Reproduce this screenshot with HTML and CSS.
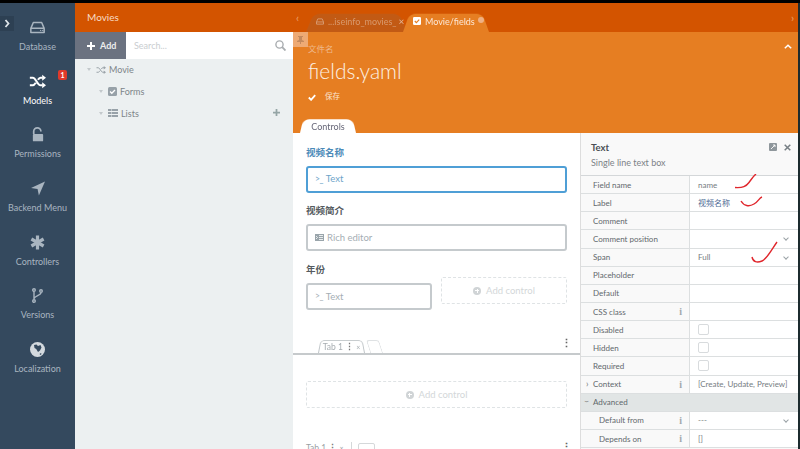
FILE: index.html
```html
<!DOCTYPE html>
<html lang="en">
<head>
  <meta charset="UTF-8">
  <title>Movie/fields</title>
  <link rel="stylesheet" href="styles.css">
</head>
<body>
<div class="app">
  <nav class="side">
    <span class="side-toggle"><svg width="7" height="9" viewBox="0 0 7 9"><path d="M1.5 1l3 3.500-3 3.500" fill="none" stroke="#dfe5ea" stroke-width="1.800"/></svg></span>
    <a class="nav-item">
      <svg class="nav-icon" width="15" height="13" viewBox="0 0 18 16"><path d="M4 2h10l3 7v5H1V9z M1.500 9h15" fill="none" stroke="currentColor" stroke-width="1.800" stroke-linejoin="round"/><path d="M12 11.500h1.500M14.500 11.500H16" stroke="currentColor" stroke-width="1.200"/></svg>
      <span>Database</span>
    </a>
    <a class="nav-item active">
      <svg class="nav-icon" width="17" height="14" viewBox="0 0 20 16"><path d="M1 3.500h3.500c3.500 0 5.500 9 9 9H16M1 12.500h3.500c1.500 0 2.500-1.500 3.500-3M10.500 6c.9-1.400 1.900-2.500 3-2.500H16" fill="none" stroke="currentColor" stroke-width="2.400"/><path d="M15.500 0l4.500 3.500L15.500 7zM15.500 9l4.500 3.500-4.500 3.500z" fill="currentColor"/></svg>
      <span>Models</span>
      <b class="badge">1</b>
    </a>
    <a class="nav-item">
      <svg class="nav-icon" width="12" height="15" viewBox="0 0 14 17"><path d="M2 8V5a4.200 4.200 0 0 1 8.400 0" fill="none" stroke="currentColor" stroke-width="2"/><rect x="1" y="8" width="12" height="8.500" rx="1" fill="currentColor"/></svg>
      <span>Permissions</span>
    </a>
    <a class="nav-item">
      <svg class="nav-icon" width="14" height="14" viewBox="0 0 16 16"><path d="M16 0L9 16 7.500 8.500 0 7.500z" fill="currentColor"/></svg>
      <span>Backend Menu</span>
    </a>
    <a class="nav-item">
      <svg class="nav-icon" width="15" height="15" viewBox="0 0 15 15"><path d="M7.500 .5v14M1.400 4l12.200 7M13.600 4L1.400 11" stroke="currentColor" stroke-width="3.200"/></svg>
      <span>Controllers</span>
    </a>
    <a class="nav-item">
      <svg class="nav-icon" width="11" height="15" viewBox="0 0 11 15"><g fill="none" stroke="currentColor" stroke-width="1.400"><circle cx="2" cy="2" r="1.300"/><circle cx="2" cy="13" r="1.300"/><circle cx="9" cy="3" r="1.300"/><path d="M2 3.500v8M9 4.500c0 3-6 3-7 6"/></g></svg>
      <span>Versions</span>
    </a>
    <a class="nav-item">
      <svg class="nav-icon" width="15" height="15" viewBox="0 0 15 15"><circle cx="7.500" cy="7.500" r="7.500" fill="#d3d9de"/><path d="M4 3l2.500-.5L8 4l2.500-1 1 2.500-1.500 3-2 1.500-1.800-3L4.500 6zM9.500 12l1.500-1 .5 1-1 1z" fill="#34495e"/></svg>
      <span>Localization</span>
    </a>
  </nav>

  <section class="tree-panel">
    <header class="tree-head">Movies</header>
    <div class="tree-tools">
      <button class="add-btn"><svg width="8" height="8" viewBox="0 0 8 8"><path d="M4 0v8M0 4h8" stroke="#fff" stroke-width="2"/></svg>Add</button>
      <div class="search">
        <span>Search...</span>
        <svg width="11" height="11" viewBox="0 0 11 11"><circle cx="4.500" cy="4.500" r="3.600" fill="none" stroke="#a9adb0" stroke-width="1.400"/><path d="M7.200 7.200L10.500 10.500" stroke="#a9adb0" stroke-width="1.800"/></svg>
      </div>
    </div>
    <ul class="tree">
      <li class="tree-row">
        <i class="caret"></i>
        <svg width="10" height="8" viewBox="0 0 20 16"><path d="M1 3.500h3.500c3.500 0 5.500 9 9 9H16M1 12.500h3.500c1.500 0 2.500-1.500 3.500-3M10.500 6c.9-1.400 1.900-2.500 3-2.500H16" fill="none" stroke="#9aa3a9" stroke-width="2"/><path d="M15.500 0l4.500 3.500L15.500 7zM15.500 9l4.500 3.500-4.500 3.500z" fill="#9aa3a9"/></svg>
        Movie
      </li>
      <li class="tree-row sub">
        <i class="caret"></i>
        <svg width="9" height="9" viewBox="0 0 9 9"><rect width="9" height="9" rx="1.500" fill="#97a1a8"/><path d="M2 4.500l1.800 1.800L7 3" fill="none" stroke="#fff" stroke-width="1.300"/></svg>
        Forms
      </li>
      <li class="tree-row sub">
        <i class="caret"></i>
        <svg width="10" height="8" viewBox="0 0 10 8"><path d="M0 0h3v2H0zM3.500 0H10v2H3.500zM0 3h3v2H0zM3.500 3H10v2H3.500zM0 6h3v2H0zM3.500 6H10v2H3.500z" fill="#97a1a8"/></svg>
        Lists
        <svg class="row-plus" width="7" height="7" viewBox="0 0 8 8"><path d="M4 0v8M0 4h8" stroke="#95a5a6" stroke-width="2"/></svg>
      </li>
    </ul>
  </section>

  <main class="main">
    <div class="tabbar">
      <span class="tab-arrow">‹</span>
      <div class="doc-tab">
        <svg width="8" height="7" viewBox="0 0 18 16"><path d="M4 2h10l3 7v5H1V9z M1.500 9h15" fill="none" stroke="#d8a07a" stroke-width="2"/></svg>
        <span>...iseinfo_movies_</span><em>×</em>
      </div>
      <div class="doc-tab current">
        <svg width="8" height="8" viewBox="0 0 9 9"><rect width="9" height="9" rx="1.500" fill="#fff"/><path d="M2 4.500l1.800 1.800L7 3" fill="none" stroke="#e67e22" stroke-width="1.300"/></svg>
        <span>Movie/fields</span><i class="dot"></i>
      </div>
      <span class="tab-arrow right">›</span>
    </div>

    <div class="hero">
      <span class="pin"><svg width="7" height="8" viewBox="0 0 7 8"><path d="M1 0h5v1H5v3l2 1v1H4v2H3V6H0V5l2-1V1H1z" fill="#c48a5e"/></svg></span>
      <div class="hero-label">文件名</div>
      <h1>fields.yaml</h1>
      <div class="save"><svg width="8" height="7" viewBox="0 0 8 7"><path d="M.8 3.500l2.300 2.300L7.200 1.200" fill="none" stroke="#fff" stroke-width="1.800"/></svg>保存</div>
      <svg class="collapse" width="8" height="5" viewBox="0 0 8 5"><path d="M.8 4.200L4 1.200l3.200 3" fill="none" stroke="#fff" stroke-width="1.500"/></svg>
      <div class="hero-tab">Controls</div>
    </div>

    <div class="split">
      <div class="form">
        <label class="f-label on">视频名称</label>
        <div class="control on"><span class="prompt">&gt;_</span> Text</div>

        <label class="f-label">视频简介</label>
        <div class="control"><svg width="9" height="7" viewBox="0 0 9 7"><path d="M0 0h9v7H0z" fill="#9aa5ab"/><path d="M4 1.500h4M4 3.500h4M4 5.500h4M1 2l1.500 1.500L1 5" fill="none" stroke="#fff" stroke-width=".8"/></svg> Rich editor</div>

        <div class="two">
          <div class="col">
            <label class="f-label">年份</label>
            <div class="control"><span class="prompt">&gt;_</span> Text</div>
          </div>
          <div class="col">
            <div class="add-control"><i class="plus-dot"></i>Add control</div>
          </div>
        </div>

        <div class="tabs-head">
          <div class="mini-tab">Tab 1 <b>⋮</b> <small>×</small></div>
          <div class="mini-add"></div>
          <b class="dots">⋮</b>
        </div>
        <div class="tab-body">
          <div class="add-control"><i class="plus-dot"></i>Add control</div>
        </div>
        <div class="tabs-foot">
          <span>Tab 1 <b>⋮</b> <small>×</small></span>
          <i class="foot-box"></i>
          <b class="dots">⋮</b>
        </div>
      </div>

      <aside class="inspector">
        <div class="insp-head">
          <strong>Text</strong>
          <p>Single line text box</p>
          <svg class="insp-max" width="8" height="8" viewBox="0 0 8 8"><rect width="8" height="8" rx="1" fill="#8f979c"/><path d="M2 6l4-4M4 2h2v2" fill="none" stroke="#fff" stroke-width=".9"/></svg>
          <svg class="insp-close" width="7" height="7" viewBox="0 0 7 7"><path d="M.7.700l5.600 5.600M6.300.700L.7 6.300" stroke="#777f84" stroke-width="1.500"/></svg>
        </div>
        <div class="prop"><span class="k">Field name</span><span class="v">name</span></div>
        <div class="prop"><span class="k">Label</span><span class="v blue">视频名称</span></div>
        <div class="prop"><span class="k">Comment</span><span class="v"></span></div>
        <div class="prop"><span class="k">Comment position</span><span class="v"><i class="chev"></i></span></div>
        <div class="prop"><span class="k">Span</span><span class="v">Full<i class="chev"></i></span></div>
        <div class="prop"><span class="k">Placeholder</span><span class="v"></span></div>
        <div class="prop"><span class="k">Default</span><span class="v"></span></div>
        <div class="prop"><span class="k">CSS class<i class="info">i</i></span><span class="v"></span></div>
        <div class="prop"><span class="k">Disabled</span><span class="v"><i class="box"></i></span></div>
        <div class="prop"><span class="k">Hidden</span><span class="v"><i class="box"></i></span></div>
        <div class="prop"><span class="k">Required</span><span class="v"><i class="box"></i></span></div>
        <div class="prop"><span class="k"><u class="tw">›</u>Context<i class="info">i</i></span><span class="v">[Create, Update, Preview]</span></div>
        <div class="prop group"><span class="k"><u class="tw down">›</u>Advanced</span></div>
        <div class="prop"><span class="k deep">Default from<i class="info">i</i></span><span class="v">---<i class="chev"></i></span></div>
        <div class="prop"><span class="k deep">Depends on<i class="info">i</i></span><span class="v">[]</span></div>
      </aside>
    </div>

    <!-- hand drawn marks over the inspector -->
    <svg class="marks" width="100" height="100" viewBox="0 0 100 100">
      <path d="M0 13.500c8 .5 11-1 14-5s4-6 7-8.500" />
      <path d="M6 27c3 5 8 6 13 3s5-6 8-7" />
      <path d="M17 83c1 5 5 6 10 4s10-12 15-19" />
    </svg>
  </main>
</div>
</body>
</html>
```

FILE: styles.css
```css
* { box-sizing: border-box; }
html, body { margin: 0; height: 100%; overflow: hidden; }
body { background: #000; font-family: Lato, "Noto Sans CJK SC", sans-serif; font-size: 9px; color: #555; }
svg { flex: none; }
ul { list-style: none; margin: 0; padding: 0; }

.app { display: flex; height: 449px; padding: 3px 2px 0 0; background: #1c2b2e; position: relative; }
.app::before { content: ""; position: absolute; left: 0; right: 0; top: 0; height: 3px; background: #000; }

/* left navigation */
.side { width: 75px; flex: none; background: #34495e; padding-top: 16px; position: relative; }
.side-toggle { position: absolute; left: 0; top: 13px; width: 14px; height: 15px; background: #2d4053; display: flex; align-items: center; justify-content: center; }
.nav-item { height: 53.700px; display: flex; flex-direction: column; align-items: center; color: #a9b5c0; font-size: 9px; position: relative; }
.nav-item .nav-icon { height: 17px; margin-bottom: 5px; }
.nav-item.active { color: #fff; }
.badge { position: absolute; left: 58px; top: -3px; width: 9px; height: 10px; background: #e0392b; border-radius: 2px; color: #fff; font-size: 7px; font-weight: 700; text-align: center; line-height: 10px; }

/* model tree */
.tree-panel { width: 218px; flex: none; background: #ecf0f1; }
.tree-head { height: 29px; background: #d35400; color: #f8dcc6; font-size: 10px; line-height: 29px; padding-left: 12px; }
.tree-tools { display: flex; height: 27px; }
.add-btn { width: 51px; border: 0; padding: 0 0 0 12px; background: #6b7280; color: #eee; font: 700 9px Lato, sans-serif; display: flex; align-items: center; gap: 5px; }
.search { flex: 1; background: #fff; display: flex; align-items: center; justify-content: space-between; padding: 0 7px 0 8px; color: #c9cdd0; font-size: 9px; }
.tree-row { height: 21.700px; display: flex; align-items: center; gap: 3px; padding-left: 12px; font-size: 9px; color: #7d8589; position: relative; }
.tree-row.sub { padding-left: 24px; }
.caret { width: 0; height: 0; border: 2.500px solid transparent; border-top: 3px solid #c3c9cc; border-bottom: 0; margin-right: 2px; }
.row-plus { position: absolute; right: 13px; top: 7px; }

/* main area */
.main { flex: 1; min-width: 0; background: #fff; display: flex; flex-direction: column; position: relative; }
.tabbar { height: 29px; background: #d35400; display: flex; align-items: flex-end; padding-left: 3px; flex: none; }
.tab-arrow { color: #eda26b; font-size: 11px; align-self: center; width: 10px; }
.tab-arrow.right { margin-left: auto; text-align: right; width: 14px; padding-right: 4px; }
.doc-tab { height: 22px; padding: 0 5px 0 10px; margin-right: 2px; display: flex; align-items: center; gap: 4px; color: #d99a6e; font-size: 9px; width: 101px; white-space: nowrap; position: relative; z-index: 0; }
.doc-tab::before { content: ""; position: absolute; inset: 0; z-index: -1; background: #c25a14; border-radius: 7px 7px 0 0; transform: perspective(30px) rotateX(14deg); transform-origin: bottom; }
.doc-tab em { font-style: normal; color: #e5b595; font-size: 10px; line-height: 1; margin-left: -2px; }
.doc-tab.current { width: 86px; color: #fbe7d7; padding-left: 10px; margin-left: -6px; }
.doc-tab.current::before { background: #e67e22; }
.dot { width: 6px; height: 6px; border-radius: 50%; background: #efb084; margin: -3px 0 0 -1px; }

.hero { height: 101px; background: #e67e22; position: relative; padding: 9px 0 0 15px; color: #fff; flex: none; }
.pin { position: absolute; left: 0; top: 0; width: 15px; height: 15px; background: #eeaa74; display: flex; align-items: center; justify-content: center; }
.hero-label { color: #efb98c; font-size: 8.500px; line-height: 16px; }
.hero h1 { margin: -2px 0 2px; font-weight: 300; font-size: 21px; line-height: 31px; color: #fdf0e3; }
.save { display: flex; align-items: center; gap: 9px; font-size: 7.500px; line-height: 18px; color: #fbe3cf; }
.collapse { position: absolute; right: 6px; top: 12px; }
.hero-tab { position: absolute; left: 7px; bottom: 0; width: 56px; height: 16px; text-align: center; line-height: 19px; font-size: 9px; color: #667; z-index: 0; }
.hero-tab::before { content: ""; position: absolute; inset: 0; z-index: -1; background: #fff; border-radius: 7px 7px 0 0; transform: perspective(30px) rotateX(14deg); transform-origin: bottom; }

.split { flex: 1; display: flex; min-height: 0; }
.form { width: 287px; flex: none; padding: 13px 13px 0 13px; overflow: hidden; }
.f-label { display: block; font-size: 9.500px; font-weight: 700; color: #555b60; line-height: 14px; margin-bottom: 6px; }
.f-label.on { color: #4c8ab8; }
.control { height: 27px; border: 2px solid #c5cacd; border-radius: 3px; display: flex; align-items: center; gap: 3px; padding: 0 0 1px 7px; margin-bottom: 11px; color: #a5aeb4; font-size: 9.500px; }
.control.on { border-color: #4f9fd6; color: #6ea4c9; padding-bottom: 2px; }
.prompt { font-size: 8.500px; letter-spacing: -.5px; }
.two { display: flex; gap: 9px; margin-top: 12px; }
.col { flex: 1; min-width: 0; }
.col .control { margin-bottom: 0; }
.add-control { height: 27px; border: 1px dashed #dfe3e5; border-radius: 2px; display: flex; align-items: center; justify-content: center; gap: 5px; color: #d3d7d9; font-size: 9.500px; margin-top: 14px; }
.plus-dot { width: 8px; height: 8px; border-radius: 50%; background: linear-gradient(#fff, #fff) center / 4px 1px no-repeat, linear-gradient(#fff, #fff) center / 1px 4px no-repeat, #d0d4d6; }
.tabs-head { height: 17px; margin: 28px -13px 0; border-bottom: 2px solid #c6cacc; position: relative; display: flex; padding-left: 25px; }
.mini-tab { width: 47px; height: 15px; text-align: center; line-height: 18px; color: #a7adb1; font-size: 8.500px; position: relative; z-index: 0; }
.mini-tab::before { content: ""; position: absolute; inset: 0; z-index: -1; border: 1px solid #c0c5c8; border-bottom: 0; border-radius: 5px 5px 0 0; transform: perspective(30px) rotateX(14deg); transform-origin: bottom; }
.mini-tab b, .tabs-foot b { color: #777; }
.mini-tab small, .tabs-foot small { font-size: 7px; }
.mini-add { width: 13px; height: 13px; margin: 2px 0 0 3px; border: 1px solid #dfe2e4; border-bottom: 0; border-radius: 3px 3px 0 0; transform: skewX(18deg); }
.tabs-head .dots { position: absolute; right: 8px; top: -2px; color: #666; font-size: 11px; }
.tab-body { height: 27px; margin-top: 26px; }
.tab-body .add-control { margin-top: 0; }
.tabs-foot { margin-top: 35px; display: flex; align-items: flex-start; gap: 7px; color: #9aa0a4; font-size: 8.500px; position: relative; }
.foot-box { width: 17px; height: 12px; border: 1px solid #d5d8da; border-radius: 2px; margin: 0 0 0 7px; position: relative; }
.foot-box::before { content: ""; position: absolute; left: -8px; top: -2px; height: 14px; border-left: 1px solid #d5d8da; }
.tabs-foot .dots { position: absolute; right: -5px; top: -3px; color: #666; font-size: 11px; }

/* inspector */
.inspector { flex: 1; min-width: 0; background: #f9f9f9; border-left: 1px solid #ddd; }
.insp-head { height: 43px; padding: 9px 0 0 10px; position: relative; border-bottom: 1px solid #d4d7d9; }
.insp-head strong { display: block; font-size: 9.500px; color: #4a4f55; line-height: 12px; }
.insp-head p { margin: 3px 0 0; font-size: 9px; color: #7c8287; line-height: 11px; }
.insp-max { position: absolute; right: 21px; top: 10px; }
.insp-close { position: absolute; right: 7px; top: 11px; }
.prop { height: 18.150px; display: flex; border-bottom: 1px solid #dcdfe0; align-items: center; font-size: 8px; color: #62686c; }
.k { width: 109px; flex: none; height: 100%; display: flex; align-items: center; padding-left: 12px; border-right: 1px solid #dcdfe0; position: relative; white-space: nowrap; }
.k.deep { padding-left: 18px; }
.v { flex: 1; height: 100%; background: #fff; display: flex; align-items: center; padding-left: 8px; color: #767d82; position: relative; font-size: 8px; white-space: nowrap; }
.v.blue { color: #4d6a94; }
.chev { position: absolute; right: 10px; top: 6px; width: 4px; height: 4px; border-right: 1px solid #9aa2a6; border-bottom: 1px solid #9aa2a6; transform: rotate(45deg); }
.box { width: 11px; height: 11px; border: 1px solid #d8dbdd; border-radius: 2px; }
.info { position: absolute; right: 7px; font-style: normal; font-family: "Liberation Serif", serif; font-weight: 700; color: #a2a8ac; font-size: 10px; }
.tw { position: absolute; left: 5px; text-decoration: none; color: #777; font-size: 9px; line-height: 1; top: 3px; }
.tw.down { transform: rotate(90deg); }
.group { background: #e1e5e5; }
.group .k { border-right: 0; }

.marks { position: absolute; left: 442px; top: 171px; fill: none; stroke: #e0262c; stroke-width: 1.400px; pointer-events: none; }
```
